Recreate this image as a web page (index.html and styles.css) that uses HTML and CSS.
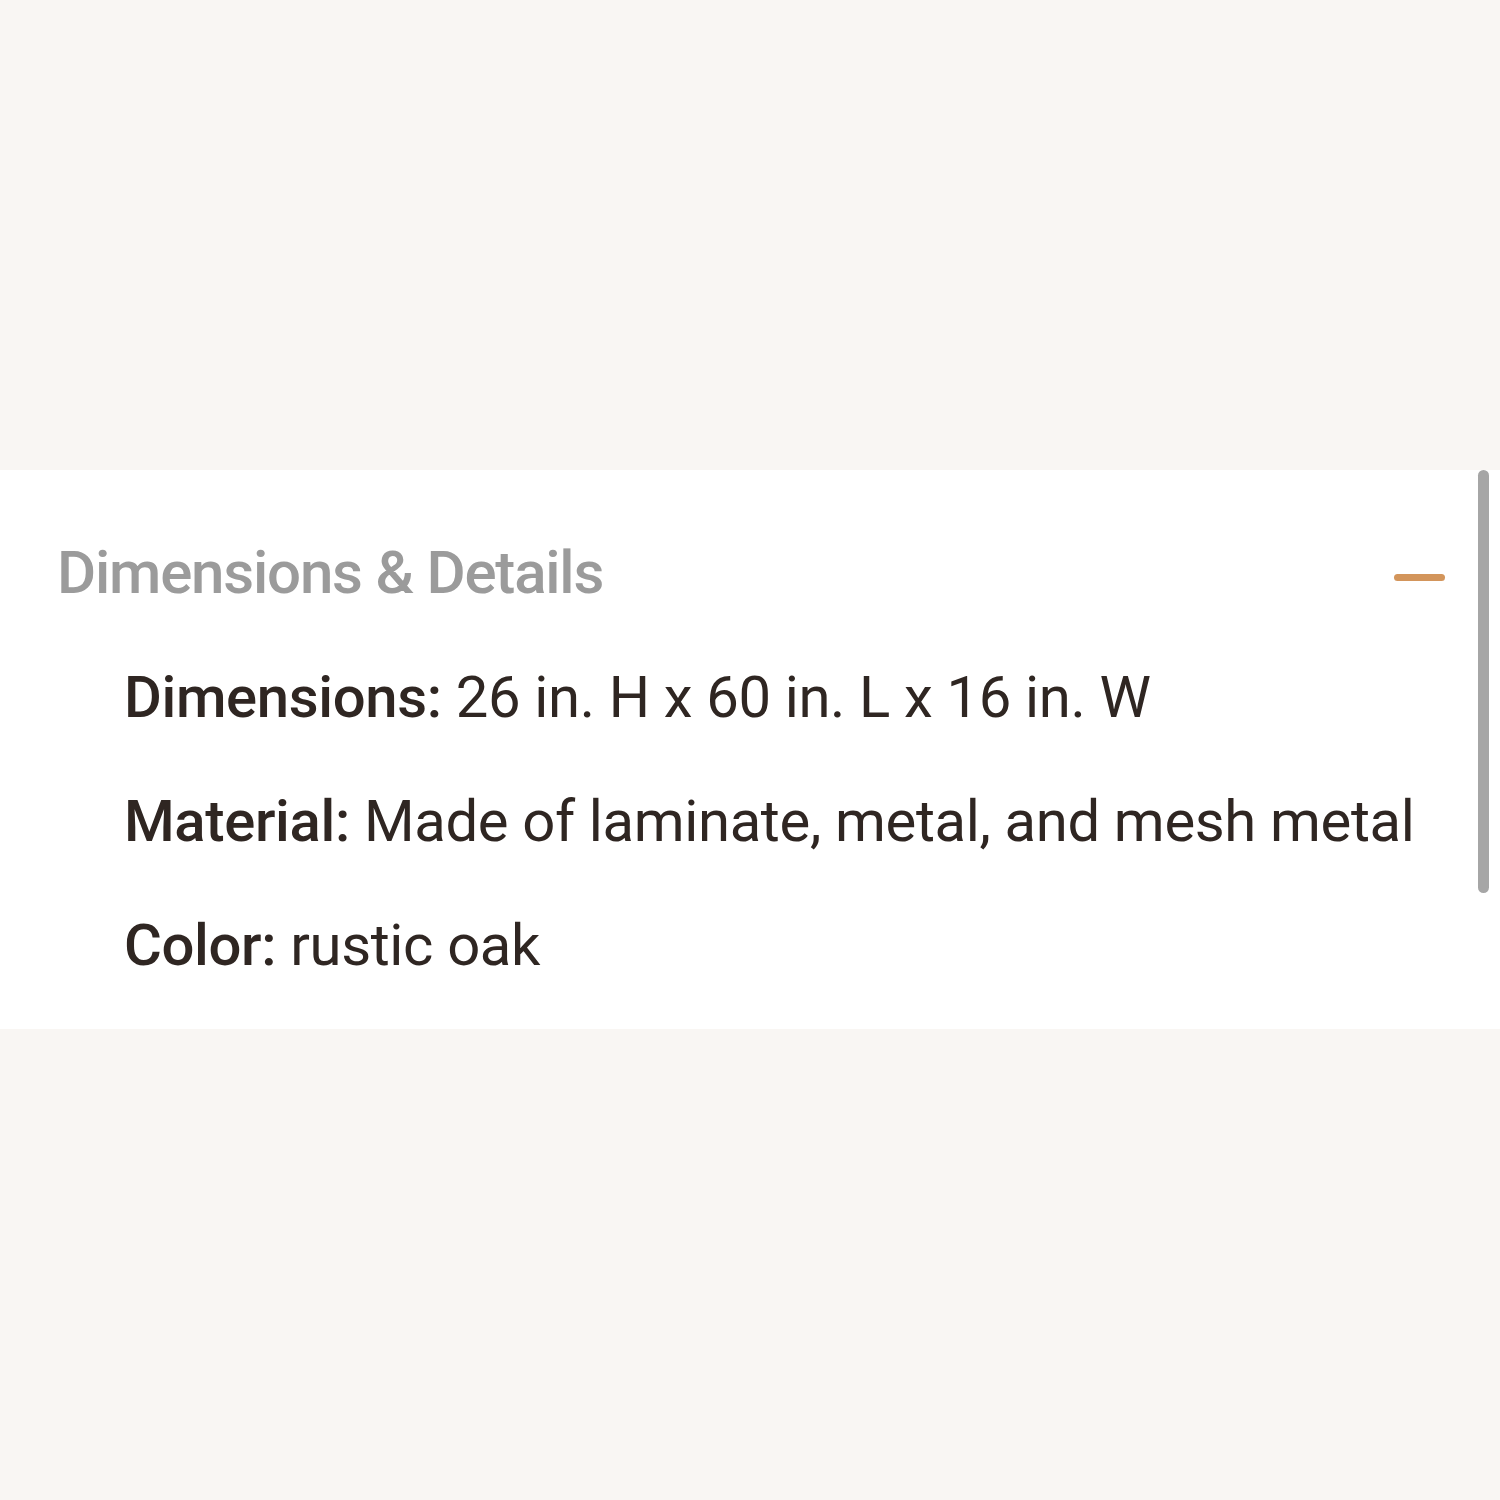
FILE: index.html
```html
<!DOCTYPE html>
<html>
<head>
<meta charset="utf-8">
<link rel="stylesheet" href="styles.css">
</head>
<body>
<div class="page">
  <section class="panel">
    <div class="content">
      <div class="header">
        <h2 class="title">Dimensions &amp; Details</h2>
        <span class="minus"></span>
      </div>
      <ul class="details">
        <li><b>Dimensions:</b> 26 in. H x 60 in. L x 16 in. W</li>
        <li><b>Material:</b> Made of laminate, metal, and mesh metal</li>
        <li><b>Color:</b> rustic oak</li>
      </ul>
    </div>
    <div class="scrollbar"><div class="thumb"></div></div>
  </section>
</div>
</body>
</html>
```

FILE: styles.css
```css
html, body {
  margin: 0;
  padding: 0;
  background: #f9f6f3;
}
.page {
  width: 1500px;
  height: 1500px;
  padding-top: 470px;
  box-sizing: border-box;
}
.panel {
  background: #ffffff;
  height: 559px;
  display: flex;
  font-family: "Roboto", "Liberation Sans", sans-serif;
}
.content {
  flex: 1;
  padding-left: 57px;
  padding-right: 33px;
  padding-top: 41px;
}
.header {
  display: flex;
  align-items: center;
  justify-content: space-between;
  height: 124px;
}
.title {
  margin: 0;
  font-size: 60px;
  font-weight: 500;
  color: #9b9b9b;
  line-height: 124px;
  letter-spacing: -1.2px;
  white-space: nowrap;
}
.minus {
  width: 51px;
  height: 7px;
  margin-top: 9px;
  border-radius: 4px;
  background: #d3955b;
}
.details {
  list-style: none;
  margin: 0;
  padding: 0 0 0 67px;
}
.details li {
  font-size: 58px;
  color: #2f2622;
  line-height: 124px;
  letter-spacing: -0.35px;
  white-space: nowrap;
}
.details b { font-weight: 500; }
.scrollbar {
  width: 11px;
  margin-right: 11px;
}
.thumb {
  width: 11px;
  height: 423px;
  border-radius: 6px;
  background: #a6a6a6;
}
```
